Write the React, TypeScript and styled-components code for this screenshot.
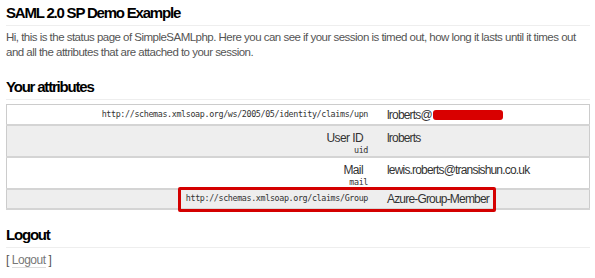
import React from "react";
import styled, { createGlobalStyle } from "styled-components";

const GlobalStyle = createGlobalStyle`
  html, body {
    margin: 0;
    padding: 0;
    background: #fff;
  }
  body {
    font-family: "Liberation Sans", Arial, sans-serif;
    color: #333;
  }
`;

const Page = styled.div`
  padding: 0 5px 0 6px;
`;

const Heading = styled.h2<{ $top?: number }>`
  margin: ${(p) => p.$top ?? 0}px 0 0;
  padding: 0 0 3px;
  font-size: 15px;
  line-height: 18px;
  font-weight: 700;
  letter-spacing: -1.2px;
  color: #000;
  border-bottom: 1px solid #eee;
`;

const Intro = styled.p`
  margin: 4px 0 0;
  font-size: 11.5px;
  line-height: 15px;
  letter-spacing: -0.52px;
  color: #555;
`;

const TableWrap = styled.div`
  position: relative;
  margin-top: 4px;
`;

const AttrTable = styled.table`
  width: 100%;
  border-collapse: collapse;
  border: 1px solid #ccc;
`;

const Row = styled.tr<{ $shaded?: boolean; $h: number }>`
  height: ${(p) => p.$h}px;
  background: ${(p) => (p.$shaded ? "#eee" : "#fff")};
  border-bottom: 2px solid #d4d4d4;
`;

const KeyCell = styled.td<{ $middle?: boolean }>`
  width: 361px;
  padding: 0 6px 0 0;
  text-align: right;
  vertical-align: ${(p) => (p.$middle ? "middle" : "top")};
`;

const ValueCell = styled.td<{ $middle?: boolean }>`
  padding: ${(p) => (p.$middle ? "1px 0 0 13px" : "5px 0 0 13px")};
  vertical-align: ${(p) => (p.$middle ? "middle" : "top")};
  font-size: 12px;
  line-height: 14px;
  letter-spacing: -0.82px;
  color: #333;
`;

const Mono = styled.div`
  font-family: "DejaVu Sans Mono", "Liberation Mono", monospace;
  font-size: 8.4px;
  line-height: 11px;
  letter-spacing: -0.37px;
  color: #333;
`;

const Label = styled.div`
  font-size: 12px;
  line-height: 14px;
  letter-spacing: -0.6px;
  padding-top: 5px;
  padding-right: 5px;
  color: #333;
`;

const Redacted = styled.span`
  display: inline-block;
  width: 70px;
  height: 10px;
  margin-left: 1px;
  vertical-align: -1px;
  background: #d90000;
  border-radius: 3px;
`;

const Highlight = styled.div`
  position: absolute;
  left: 172px;
  top: 83px;
  width: 318px;
  height: 25px;
  box-sizing: border-box;
  border: 3px solid #d40000;
  border-radius: 2px;
  pointer-events: none;
`;

const LogoutLine = styled.p`
  margin: 5px 0 0;
  font-size: 12px;
  line-height: 15px;
  letter-spacing: -0.5px;
  color: #555;
`;

const LogoutLink = styled.a`
  color: #777;
  text-decoration: none;
  border-bottom: 1px solid #ddd;
  margin: 0 3px;
`;

export default function App() {
  return (
    <>
      <GlobalStyle />
      <Page>
        <Heading $top={4}>SAML 2.0 SP Demo Example</Heading>
        <Intro>
          Hi, this is the status page of SimpleSAMLphp. Here you can see if
          your session is timed out, how long it lasts until it times out and
          all the attributes that are attached to your session.
        </Intro>

        <Heading $top={18}>Your attributes</Heading>
        <TableWrap>
          <AttrTable>
            <tbody>
              <Row $h={20}>
                <KeyCell $middle>
                  <Mono>
                    http://schemas.xmlsoap.org/ws/2005/05/identity/claims/upn
                  </Mono>
                </KeyCell>
                <ValueCell $middle>
                  lroberts@
                  <Redacted />
                </ValueCell>
              </Row>
              <Row $shaded $h={32}>
                <KeyCell>
                  <Label>User ID</Label>
                  <Mono>uid</Mono>
                </KeyCell>
                <ValueCell>lroberts</ValueCell>
              </Row>
              <Row $h={32}>
                <KeyCell>
                  <Label>Mail</Label>
                  <Mono>mail</Mono>
                </KeyCell>
                <ValueCell>lewis.roberts@transishun.co.uk</ValueCell>
              </Row>
              <Row $shaded $h={20}>
                <KeyCell $middle>
                  <Mono>http://schemas.xmlsoap.org/claims/Group</Mono>
                </KeyCell>
                <ValueCell $middle>Azure-Group-Member</ValueCell>
              </Row>
            </tbody>
          </AttrTable>
          <Highlight />
        </TableWrap>

        <Heading $top={16}>Logout</Heading>
        <LogoutLine>
          [<LogoutLink href="#">Logout</LogoutLink>]
        </LogoutLine>
      </Page>
    </>
  );
}
